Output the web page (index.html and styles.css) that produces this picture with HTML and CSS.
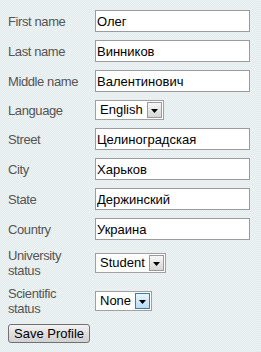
FILE: index.html
```html
<!DOCTYPE html>
<html>
<head>
    <title>Profile</title>
    <link rel="stylesheet" href="styles.css">
</head>
<body>
    <!-- profile form -->
    <form class="profile">
        <div class="row">
            <label class="caption">First name</label>
            <input class="field" type="text" value="Олег">
        </div>
        <div class="row">
            <label class="caption">Last name</label>
            <input class="field" type="text" value="Винников">
        </div>
        <div class="row">
            <label class="caption">Middle name</label>
            <input class="field" type="text" value="Валентинович">
        </div>
        <div class="row">
            <label class="caption">Language</label>
            <div class="select">
                <span class="select-value">English</span>
                <span class="select-arrow"><svg width="7" height="4" viewBox="0 0 7 4"><path d="M0 0h7L3.5 4z"/></svg></span>
            </div>
        </div>
        <div class="row">
            <label class="caption">Street</label>
            <input class="field" type="text" value="Целиноградская">
        </div>
        <div class="row">
            <label class="caption">City</label>
            <input class="field" type="text" value="Харьков">
        </div>
        <div class="row">
            <label class="caption">State</label>
            <input class="field" type="text" value="Держинский">
        </div>
        <div class="row">
            <label class="caption">Country</label>
            <input class="field" type="text" value="Украина">
        </div>
        <div class="row">
            <label class="caption">University<br>status</label>
            <div class="select">
                <span class="select-value">Student</span>
                <span class="select-arrow"><svg width="7" height="4" viewBox="0 0 7 4"><path d="M0 0h7L3.5 4z"/></svg></span>
            </div>
        </div>
        <div class="row">
            <label class="caption">Scientific<br>status</label>
            <div class="select hover">
                <span class="select-value">None</span>
                <span class="select-arrow"><svg width="7" height="4" viewBox="0 0 7 4"><path d="M0 0h7L3.5 4z"/></svg></span>
            </div>
        </div>
        <div class="row">
            <button class="save" type="button">Save Profile</button>
        </div>
    </form>
</body>
</html>
```

FILE: styles.css
```css
html {
    background: repeating-conic-gradient(#e3ebed 0 25%, #edf2f3 0 50%) 0 0 / 2px 2px;
    min-height: 100%;
}
body {
    margin: 0;
    padding: 0;
    font-family: "Liberation Sans", Arial, sans-serif;
    font-size: 13px;
    color: #000;
}
.profile {
    padding: 6px 0 0 8px;
}
.row {
    display: flex;
    align-items: center;
    padding: 4px 0;
}
.caption {
    width: 87px;
    flex: 0 0 87px;
    color: #555;
    line-height: 15px;
    letter-spacing: -0.4px;
}
.field {
    box-sizing: border-box;
    width: 155px;
    height: 22px;
    margin: 0;
    padding: 0 1px;
    border: 1px solid #9c9c9c;
    background-color: white;
    font-family: "Liberation Sans", Arial, sans-serif;
    font-size: 13px;
    color: #000;
}
.select {
    display: inline-flex;
    align-items: center;
    box-sizing: border-box;
    height: 20px;
    border: 1px solid #a0a0a0;
    background-color: white;
    padding: 1px;
}
.select-value {
    padding: 0 4px 0 3px;
    line-height: 16px;
}
.select-arrow {
    box-sizing: border-box;
    display: flex;
    align-items: center;
    justify-content: center;
    width: 15px;
    height: 16px;
    border: 1px solid #9a9a9a;
    background: linear-gradient(#f7f7f7, #d6d6d6);
}
.select-arrow svg {
    fill: #000;
    margin-top: 1px;
}
.select.hover .select-arrow {
    border-color: #3d7bad;
    background: linear-gradient(#eaf5fd, #b8dcf5);
}
.save {
    box-sizing: border-box;
    height: 19px;
    padding: 0 5px;
    border: 1px solid #707070;
    border-radius: 3px;
    background: linear-gradient(#f4f4f4, #dedede 50%, #d2d2d2);
    font-family: "Liberation Sans", Arial, sans-serif;
    font-size: 13px;
    color: #000;
    line-height: 15px;
}
```
